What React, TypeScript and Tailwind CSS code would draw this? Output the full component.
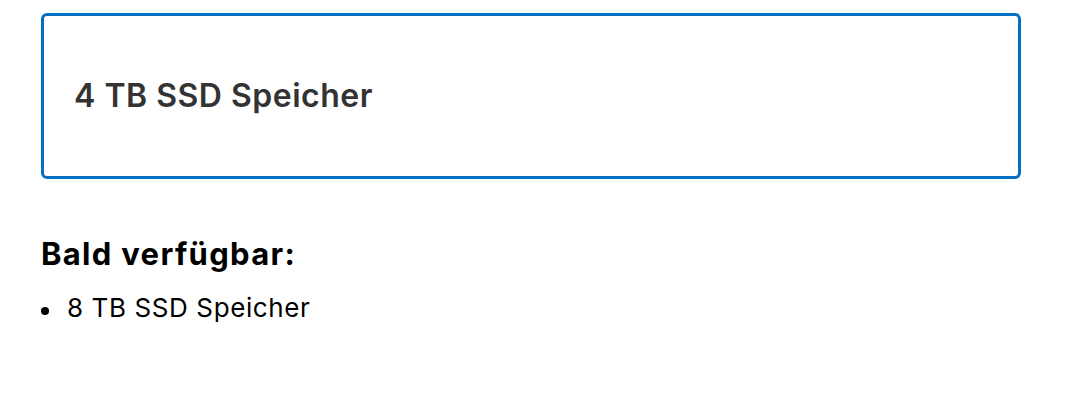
export default function App() {
  return (
    <div className="min-h-[418px] bg-white px-[41px] pt-[13px] font-['Inter','Noto_Sans',sans-serif]">
      <div className="flex h-[166px] w-[980px] items-center rounded-[6px] border-[3px] border-[#0071c5] px-[30px]">
        <span className="text-[32px] font-semibold leading-[40px] tracking-[0.5px] text-[#333333]">4 TB SSD Speicher</span>
      </div>
      <h3 className="mt-[55px] text-[31px] font-bold leading-[40px] tracking-[1.3px] text-black">Bald verfügbar:</h3>
      <ul className="mt-[18px] pl-[26px] text-[26px] leading-[32px] tracking-[0.6px] text-black">
        <li className="relative">
          <span className="absolute left-[-26px] top-[15px] h-[8px] w-[8px] rounded-full bg-black" />
          8 TB SSD Speicher
        </li>
      </ul>
    </div>
  )
}
